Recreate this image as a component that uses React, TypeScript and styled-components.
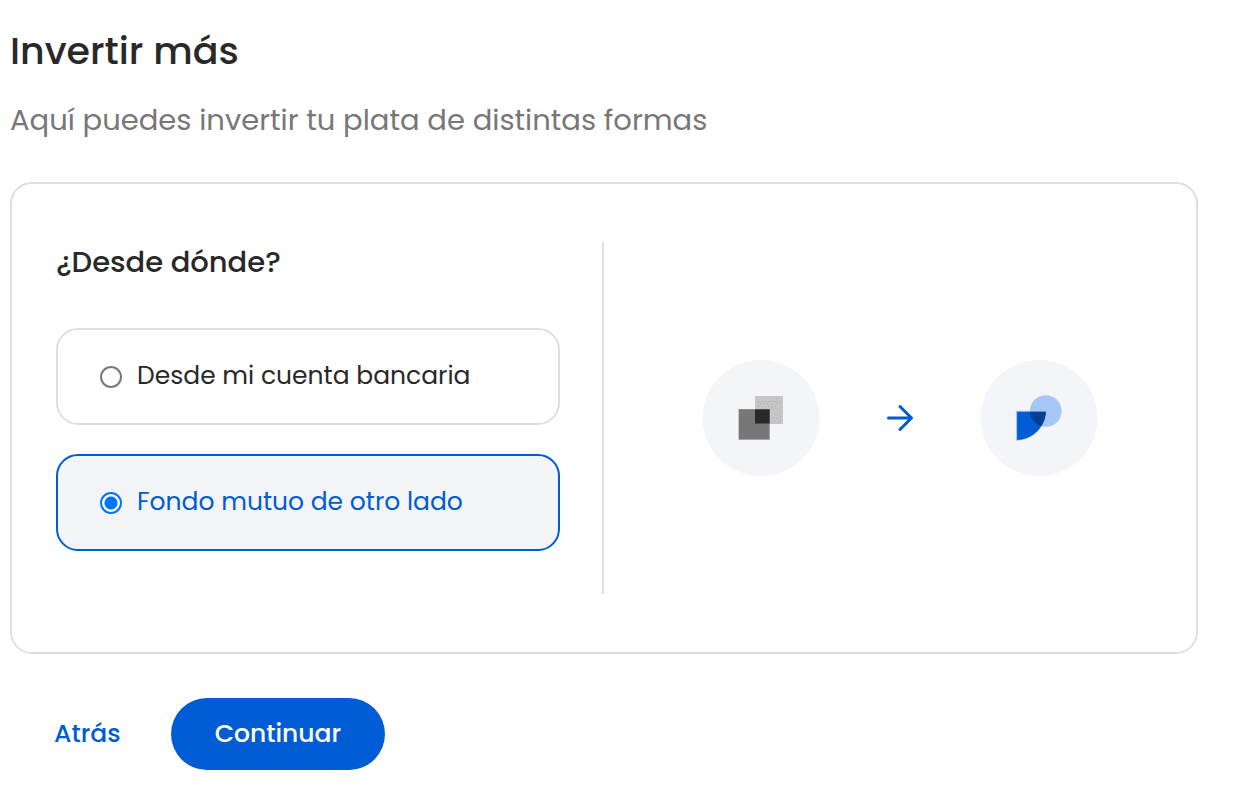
import React, { useState } from "react";
import styled, { createGlobalStyle } from "styled-components";

const color = {
  ink: "#292929",
  muted: "#777777",
  line: "#dfdfdf",
  blue: "#005cd4",
  tint: "#f3f5f9",
};

const GlobalStyle = createGlobalStyle`
  *, *::before, *::after { box-sizing: border-box; }
  body {
    margin: 0;
    background: #fff;
    color: ${color.ink};
    font-family: Poppins, Inter, "Liberation Sans", sans-serif;
  }
`;

const Page = styled.main`
  padding: 26px 62px 26px 10px;
`;

const Title = styled.h1`
  margin: 0;
  font-size: 38px;
  line-height: 50px;
  font-weight: 500;
`;

const Subtitle = styled.p`
  margin: 24px 0 42px;
  font-size: 29px;
  line-height: 40px;
  color: ${color.muted};
`;

const Card = styled.section`
  display: grid;
  grid-template-columns: 1fr 1fr;
  padding: 58px 0;
  border: 2px solid ${color.line};
  border-radius: 22px;
`;

const SourcePanel = styled.div`
  padding: 0 42px 43px 44px;
  border-right: 2px solid ${color.line};
`;

const Source = styled.fieldset`
  min-width: 0;
  margin: 0;
  padding: 0;
  border: 0;
`;

const Question = styled.legend`
  padding: 0;
  margin-bottom: 46px;
  font-size: 29px;
  line-height: 40px;
  font-weight: 500;
`;

const Options = styled.div`
  display: flex;
  flex-direction: column;
  gap: 29px;
`;

const Option = styled.label<{ $selected: boolean }>`
  display: flex;
  align-items: center;
  gap: 15px;
  padding: 28px 42px 30px;
  border: 2px solid ${(p) => (p.$selected ? color.blue : color.line)};
  border-radius: 22px;
  background: ${(p) => (p.$selected ? color.tint : "#fff")};
  color: ${(p) => (p.$selected ? color.blue : color.ink)};
  font-size: 25px;
  line-height: 35px;
  cursor: pointer;
`;

const Radio = styled.input`
  appearance: none;
  flex: none;
  width: 22px;
  height: 22px;
  margin: 2px 0 0;
  border: 2px solid ${color.muted};
  border-radius: 50%;
  background: #fff;

  &:checked {
    border-color: #0075ff;
    background: radial-gradient(circle, #0075ff 6px, #fff 7px);
  }
`;

const Transfer = styled.div`
  display: flex;
  align-items: center;
  justify-content: center;
  gap: 66px;
`;

const Actions = styled.div`
  display: flex;
  align-items: center;
  gap: 6px;
  margin-top: 44px;
`;

const Button = styled.button<{ $primary?: boolean }>`
  padding: 18px 44px;
  border: 0;
  border-radius: 36px;
  background: ${(p) => (p.$primary ? color.blue : "transparent")};
  color: ${(p) => (p.$primary ? "#fff" : color.blue)};
  font-family: inherit;
  font-size: 25px;
  line-height: 36px;
  font-weight: 500;
  cursor: pointer;
`;

const dots = [
  [57, 41], [60, 41], [63, 41], [66, 41], [69, 41], [72, 41], [75, 41], [78, 41],
  [58, 43], [62, 43], [65, 43], [70, 44], [74, 43], [77, 43],
  [56, 46], [60, 46], [66, 46], [69, 47], [73, 46], [78, 46],
  [71, 49], [75, 49], [78, 51], [72, 53], [76, 54], [78, 56],
  [71, 57], [75, 58], [78, 60], [72, 61], [76, 62],
];

const OtherFundIcon = () => (
  <svg width="118" height="116" viewBox="0 0 118 116" aria-hidden="true">
    <ellipse cx="59" cy="58" rx="58.5" ry="58" fill={color.tint} />
    <rect x="53" y="36" width="28" height="28" fill="#c6c6c6" />
    {dots.map(([x, y]) => (
      <rect key={`${x}-${y}`} x={x} y={y} width="1" height="1" fill="#adadad" />
    ))}
    <rect x="36.5" y="49" width="31.5" height="31" fill="#a5a3a3" />
    <rect x="37" y="49.5" width="30" height="29.5" fill="#777" />
    <rect x="53" y="49" width="15" height="15" fill="#777" />
    <rect x="53" y="49.5" width="14.5" height="14" fill="#292929" />
  </svg>
);

const ArrowIcon = () => (
  <svg width="28" height="28" viewBox="0 0 28 28" fill="none" aria-hidden="true">
    <path
      d="M2.5 14H25.5M14 2.5L25.5 14L14 25.5"
      stroke={color.blue}
      strokeWidth="3"
      strokeLinecap="round"
      strokeLinejoin="round"
    />
  </svg>
);

const OwnFundIcon = () => (
  <svg width="118" height="116" viewBox="0 0 118 116" aria-hidden="true">
    <defs>
      <clipPath id="fund-circle">
        <circle cx="65.8" cy="51" r="15.8" />
      </clipPath>
    </defs>
    <ellipse cx="59" cy="58" rx="58.5" ry="58" fill={color.tint} />
    <circle cx="65.8" cy="51" r="15.8" fill="#a5c6f6" />
    <path d="M36 50.8H66C66 67.2 52.7 80.6 36 80.6Z" fill="#a5c6f6" />
    <path d="M37.1 51.8H65.8C65.3 67.2 52.3 79.6 37.1 79.9Z" fill={color.blue} />
    <path
      d="M37.1 51.8H65.8C65.3 67.2 52.3 79.6 37.1 79.9Z"
      fill="#003f94"
      clipPath="url(#fund-circle)"
    />
  </svg>
);

const sources = [
  { id: "bank", label: "Desde mi cuenta bancaria" },
  { id: "fund", label: "Fondo mutuo de otro lado" },
];

export default function App() {
  const [source, setSource] = useState("fund");

  return (
    <>
      <GlobalStyle />
      <Page>
        <Title>Invertir más</Title>
        <Subtitle>Aquí puedes invertir tu plata de distintas formas</Subtitle>
        <Card>
          <SourcePanel>
            <Source>
              <Question>¿Desde dónde?</Question>
              <Options>
                {sources.map(({ id, label }) => (
                  <Option key={id} htmlFor={id} $selected={source === id}>
                    <Radio
                      type="radio"
                      id={id}
                      name="source"
                      checked={source === id}
                      onChange={() => setSource(id)}
                    />
                    {label}
                  </Option>
                ))}
              </Options>
            </Source>
          </SourcePanel>
          <Transfer>
            <OtherFundIcon />
            <ArrowIcon />
            <OwnFundIcon />
          </Transfer>
        </Card>
        <Actions>
          <Button type="button">Atrás</Button>
          <Button type="button" $primary>
            Continuar
          </Button>
        </Actions>
      </Page>
    </>
  );
}
